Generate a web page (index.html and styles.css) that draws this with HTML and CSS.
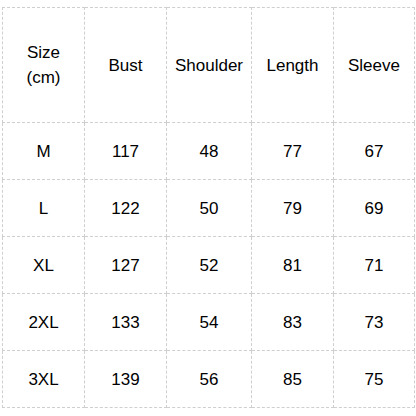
FILE: index.html
```html
<!DOCTYPE html>
<html>
<head>
<meta charset="utf-8">
<link rel="stylesheet" href="styles.css">
</head>
<body>
<table class="size-table">
  <colgroup>
    <col class="c-size">
    <col class="c-bust">
    <col class="c-shoulder">
    <col class="c-length">
    <col class="c-sleeve">
  </colgroup>
  <tr class="head">
    <td>Size<br>(cm)</td>
    <td>Bust</td>
    <td>Shoulder</td>
    <td>Length</td>
    <td>Sleeve</td>
  </tr>
  <tr><td>M</td><td>117</td><td>48</td><td>77</td><td>67</td></tr>
  <tr><td>L</td><td>122</td><td>50</td><td>79</td><td>69</td></tr>
  <tr><td>XL</td><td>127</td><td>52</td><td>81</td><td>71</td></tr>
  <tr><td>2XL</td><td>133</td><td>54</td><td>83</td><td>73</td></tr>
  <tr><td>3XL</td><td>139</td><td>56</td><td>85</td><td>75</td></tr>
</table>
</body>
</html>
```
FILE: styles.css
```css
html, body {
  margin: 0;
  background: #ffffff;
}
body {
  padding: 7px 2px 0 2px;
  font-family: "Liberation Sans", Arial, sans-serif;
}
.size-table {
  width: 412px;
  height: 398px;
  border-collapse: collapse;
  table-layout: fixed;
  color: #000000;
  font-size: 17px;
}
.c-size { width: 82px; }
.c-bust { width: 82px; }
.c-shoulder { width: 85px; }
.c-length { width: 82px; }
.c-sleeve { width: 81px; }
.size-table td {
  border: 1px dashed #cfcfcf;
  text-align: center;
  vertical-align: middle;
  padding: 0;
  line-height: 25px;
  height: 56px;
}
.size-table .head td {
  height: 114px;
}
```
